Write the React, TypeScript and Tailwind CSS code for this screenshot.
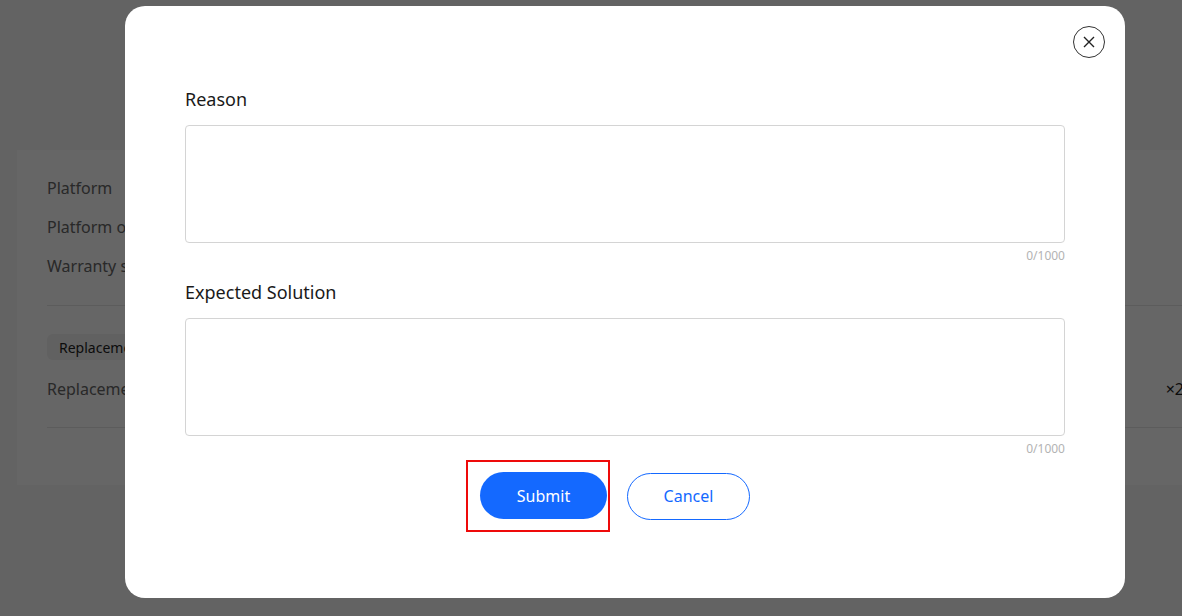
import React from "react";

function Field({ label }: { label: string }) {
  return (
    <div className="flex flex-col">
      <div className="text-[18px] leading-[24px] text-[#1a1a1a]">{label}</div>
      <textarea className="mt-[14px] h-[118px] w-full resize-none rounded-[4px] border border-[#d4d4d4] outline-none" />
      <div className="mt-[5px] text-right text-[12px] leading-[16px] text-[#b3b3b3]">0/1000</div>
    </div>
  );
}

export default function App() {
  return (
    <div
      className="relative h-[616px] w-[1182px] overflow-hidden bg-[#f7f7f7]"
      style={{ fontFamily: '"Noto Sans", "Open Sans", sans-serif' }}
    >
      <div className="pl-[17px] pt-[150px]">
        <div className="h-[335px] w-[1250px] bg-white px-[30px] pt-[26px]">
          <div className="flex flex-col gap-[15px] text-[16px] leading-[24px] text-[#666]">
            <div>Platform</div>
            <div>Platform order</div>
            <div>Warranty status</div>
          </div>
          <div className="mt-[27px] h-px w-full bg-[#e5e5e5]" />
          <div className="mt-[28px] inline-flex h-[26px] items-center rounded-[6px] bg-[#f2f2f2] px-[12px] text-[14px] text-[#222]">
            Replacement
          </div>
          <div className="mt-[17px] flex w-[1137px] items-center justify-between text-[16px] leading-[24px] text-[#666]">
            <span>Replacement item</span>
            <span className="text-[#222]">×2</span>
          </div>
          <div className="mt-[26px] h-px w-full bg-[#e5e5e5]" />
        </div>
      </div>

      <div className="absolute inset-0 bg-black/60" />

      <div className="absolute left-[125px] top-[6px] h-[592px] w-[1000px] rounded-[20px] bg-white px-[60px] pt-[81px]">
        <button className="absolute right-[20px] top-[20px] flex h-[32px] w-[32px] items-center justify-center rounded-full border border-[#333] text-[#222]">
          <svg width="14" height="14" viewBox="0 0 14 14" fill="none" stroke="currentColor" strokeWidth="1.4">
            <path d="M2 2L12 12M12 2L2 12" />
          </svg>
        </button>
        <div className="flex flex-col gap-[16px]">
          <Field label="Reason" />
          <Field label="Expected Solution" />
        </div>
        <div className="mt-[3px] flex items-center pl-[281px]">
          <div className="border-2 border-[#ee0a0a] pb-[11px] pl-[12px] pr-[1px] pt-[10px]">
            <button className="h-[47px] w-[127px] rounded-full bg-[#1469ff] text-[16px] text-white">
              Submit
            </button>
          </div>
          <button className="ml-[17px] h-[47px] w-[123px] rounded-full border border-[#1469ff] text-[16px] text-[#1469ff]">
            Cancel
          </button>
        </div>
      </div>
    </div>
  );
}
